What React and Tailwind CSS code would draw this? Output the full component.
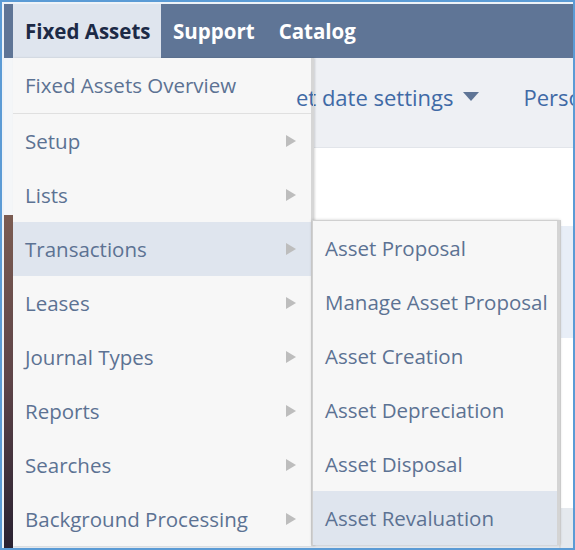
import React from "react";

const font = { fontFamily: '"Open Sans", "Noto Sans", sans-serif' };

const mainItems = [
  { label: "Setup", arrow: true },
  { label: "Lists", arrow: true },
  { label: "Transactions", arrow: true, active: true },
  { label: "Leases", arrow: true },
  { label: "Journal Types", arrow: true },
  { label: "Reports", arrow: true },
  { label: "Searches", arrow: true },
  { label: "Background Processing", arrow: true },
];

const subItems = [
  { label: "Asset Proposal" },
  { label: "Manage Asset Proposal" },
  { label: "Asset Creation" },
  { label: "Asset Depreciation" },
  { label: "Asset Disposal" },
  { label: "Asset Revaluation", active: true },
];

function Arrow() {
  return (
    <svg width="10" height="12" viewBox="0 0 10 12" className="shrink-0">
      <path d="M0 0 L10 6 L0 12 Z" fill="#bdbdbd" />
    </svg>
  );
}

export default function App() {
  return (
    <div
      className="relative w-[575px] h-[550px] overflow-hidden border-2 border-[#5b9bd5] bg-white"
      style={font}
    >
      <div className="flex flex-col h-full border-t-2 border-l-2 border-[#eef3f8]">
        {/* top bar */}
        <div className="h-[54px] shrink-0 bg-[#5f7596] flex items-stretch pl-[9px] whitespace-nowrap">
          <div className="w-[148px] bg-[#dfe5ee] flex items-center pl-[12px] text-[20.5px] font-bold text-[#1c2a46]">
            Fixed Assets
          </div>
          <div className="flex items-center pl-[12px] text-[20.5px] font-bold text-white">
            Support
          </div>
          <div className="flex items-center pl-[24px] text-[20.5px] font-bold text-white">
            Catalog
          </div>
        </div>
        {/* below */}
        <div className="flex flex-1 min-h-0">
          <div className="w-[9px] shrink-0 flex flex-col">
            <div className="h-[157px] bg-[#f4f6f8]" />
            <div className="flex-1 bg-linear-to-b from-[#7b5c52] via-[#5e4448] to-[#2a2232]" />
          </div>
          <div className="flex-1 flex flex-col min-w-0">
            <div className="h-[90px] bg-[#eef0f4] border-b border-[#e2e5ea] flex items-center pb-[12px] text-[22px] leading-[30px] text-[#3f6aa6] whitespace-nowrap overflow-hidden">
              <span className="ml-[283px]">et date settings</span>
              <svg width="16" height="9" viewBox="0 0 16 9" className="ml-[9px] shrink-0">
                <path d="M0 0 L16 0 L8 9 Z" fill="#5f7596" />
              </svg>
              <span className="ml-[45px]">Personalize</span>
            </div>
            <div className="h-[72px] bg-white" />
            <div className="flex-1 flex">
              <div className="flex-1 flex flex-col">
                <div className="h-[290px] bg-white" />
                <div className="flex-1 bg-[#e5e9ee]" />
              </div>
              <div className="w-[14px] flex flex-col border-l-2 border-[#dcdcdc]">
                <div className="h-[6px] bg-white" />
                <div className="h-[112px] bg-[#e8eef7]" />
                <div className="h-[170px] bg-white" />
                <div className="flex-1 bg-[#e5e9ee]" />
              </div>
            </div>
          </div>
        </div>
      </div>

      {/* main dropdown */}
      <div className="absolute left-[11px] top-[56px] w-[301px] bg-[#f7f7f7] border-r-[3px] border-[#d6d6d6] shadow-[1px_0_2px_rgba(0,0,0,0.15)] whitespace-nowrap">
        <div className="h-[56px] flex items-center pl-[12px] text-[20.5px] text-[#5c7293] border-b border-[#e0e0e0]">
          Fixed Assets Overview
        </div>
        {mainItems.map((it) => (
          <div
            key={it.label}
            className={
              "h-[54px] flex items-center justify-between pl-[12px] pr-[15px] text-[20.5px] text-[#5c7293] " +
              (it.active ? "bg-[#dfe5ee]" : "")
            }
          >
            <span>{it.label}</span>
            {it.arrow && <Arrow />}
          </div>
        ))}
      </div>

      {/* start of the page bar's label, showing over the menu's edge */}
      <div className="absolute left-[294px] top-[80px] w-[17px] overflow-hidden text-[22px] leading-[30px] text-[#3f6aa6] whitespace-nowrap pointer-events-none">
        et
      </div>

      {/* submenu */}
      <div className="absolute left-[310px] top-[218px] w-[248px] bg-[#f7f7f7] border-t border-l border-[#d0d0d0] border-r-[3px] border-r-[#d4d4d4] shadow-[0_0_3px_rgba(0,0,0,0.2)] whitespace-nowrap">
        {subItems.map((it) => (
          <div
            key={it.label}
            className={
              "h-[54px] flex items-center pl-[12px] text-[20.5px] text-[#5c7293] " +
              (it.active ? "bg-[#dfe5ee]" : "")
            }
          >
            {it.label}
          </div>
        ))}
      </div>
    </div>
  );
}
